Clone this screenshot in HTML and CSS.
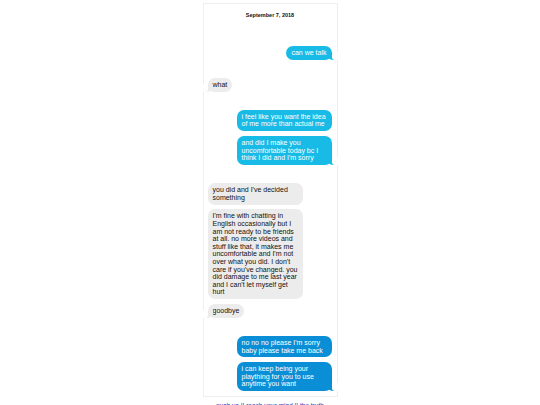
FILE: index.html
```html
<!DOCTYPE html>
<html lang="en">
  <head>
    <meta charset="utf-8">
    <title>September 7, 2018</title>
    <link rel="stylesheet" href="styles.css">
  </head>
  <body>

  <div class="thread">
    <div class="date">September 7, 2018</div>

    <div class="group">
      <div class="msg out tail">can we talk</div>
    </div>

    <div class="group">
      <div class="msg in tail">what</div>
    </div>

    <div class="group">
      <div class="msg out">i feel like you want the idea of me more than actual me</div>
      <div class="msg out tail">and did I make you uncomfortable today bc I think I did and I'm sorry</div>
    </div>

    <div class="group">
      <div class="msg in">you did and I've decided something</div>
      <div class="msg in">I'm fine with chatting in English occasionally but I am not ready to be friends at all. no more videos and stuff like that, it makes me uncomfortable and I'm not over what you did. I don't care if you've changed. you did damage to me last year and I can't let myself get hurt</div>
      <div class="msg in tail">goodbye</div>
    </div>

    <div class="group">
      <div class="msg out deep">no no no please I'm sorry baby please take me back</div>
      <div class="msg out deep tail">i can keep being your plaything for you to use anytime you want</div>
    </div>
  </div>

  <div class="caption"><a href="#">push ya !! reach your mind !! the truth</a></div>

  </body>
</html>
```

FILE: styles.css
```css
body {
  margin: 0;
  padding: 0;
  background: #ffffff;
  color: #111;
  font-family: "Liberation Sans", Arial, sans-serif;
  font-size: 7px;
  line-height: 7.6px;
}

.thread {
  width: 135px;
  margin: 3px auto 0;
  border: 1px solid #efefef;
  padding: 0 4px 5px 4px;
  box-sizing: border-box;
  display: flex;
  flex-direction: column;
  gap: 18px;
}

.date {
  font-size: 5.5px;
  font-weight: bold;
  text-align: center;
  margin-top: 8px;
  margin-bottom: 8px;
}

.group {
  display: flex;
  flex-direction: column;
  gap: 4.7px;
}

.msg {
  position: relative;
  max-width: 85px;
  padding: 3.2px 5px;
  border-radius: 7px;
}

.in {
  align-self: flex-start;
  background: #ececec;
  color: #111;
}

.out {
  align-self: flex-end;
  background: #17bbe6;
  color: #fff;
  margin-right: 1px;
}

.out.deep {
  background: #0a8fd6;
}

/* bubble tails */
.tail::before,
.tail::after {
  content: "";
  position: absolute;
  bottom: 0;
  height: 8px;
}

.out.tail::before {
  right: -2px;
  width: 7px;
  background: #17bbe6;
  border-bottom-left-radius: 6px 5px;
}

.out.deep.tail::before {
  background: #0a8fd6;
}

.out.tail::after {
  right: -9px;
  width: 9px;
  background: #fff;
  border-bottom-left-radius: 3px;
}

.in.tail::before {
  left: -2px;
  width: 7px;
  background: #ececec;
  border-bottom-right-radius: 6px 5px;
}

.in.tail::after {
  left: -9px;
  width: 9px;
  background: #fff;
  border-bottom-right-radius: 3px;
}

.caption {
  text-align: center;
  font-size: 6.5px;
  margin-top: 5px;
}

.caption a {
  color: #2f36b8;
  text-decoration: none;
}
```
